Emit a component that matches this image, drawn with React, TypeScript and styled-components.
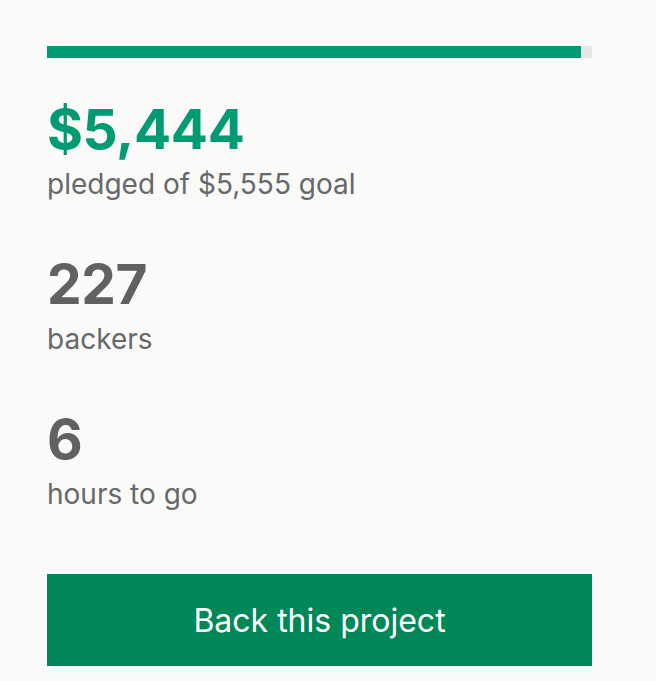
import { createGlobalStyle, styled } from "styled-components";

const GlobalStyle = createGlobalStyle`
  html, body {
    margin: 0;
    background: #fafaf8;
  }
  body {
    font-family: Inter, "Noto Sans", sans-serif;
  }
`;

const Panel = styled.div`
  width: 545px;
  padding: 46px 0 0 47px;
  display: flex;
  flex-direction: column;
`;

const Track = styled.div`
  height: 12px;
  background: #e8e6e4;
  margin-bottom: 39px;
`;

const Fill = styled.div`
  height: 100%;
  background: #009b72;
`;

const Stat = styled.div`
  display: flex;
  flex-direction: column;
  gap: 6px;
  margin-bottom: 51px;
`;

const Value = styled.div<{ $accent?: boolean }>`
  font-size: 55px;
  font-weight: 700;
  line-height: 64px;
  letter-spacing: -0.4px;
  color: ${(p) => (p.$accent ? "#009b72" : "#5f6163")};
`;

const Label = styled.div`
  font-size: 28px;
  line-height: 34px;
  color: #66686a;
`;

const BackButton = styled.button`
  margin-top: 12px;
  height: 92px;
  padding: 0;
  border: none;
  background: #008758;
  color: #ffffff;
  font-family: Inter, "Noto Sans", sans-serif;
  font-size: 32px;
  cursor: pointer;
`;

const stats = [
  { value: "$5,444", label: "pledged of $5,555 goal", accent: true },
  { value: "227", label: "backers" },
  { value: "6", label: "hours to go" },
];

export default function App() {
  const pledged = 5444;
  const goal = 5555;
  return (
    <>
      <GlobalStyle />
      <Panel>
        <Track>
          <Fill style={{ width: `${(pledged / goal) * 100}%` }} />
        </Track>
        {stats.map((s) => (
          <Stat key={s.label}>
            <Value $accent={s.accent}>{s.value}</Value>
            <Label>{s.label}</Label>
          </Stat>
        ))}
        <BackButton>Back this project</BackButton>
      </Panel>
    </>
  );
}
